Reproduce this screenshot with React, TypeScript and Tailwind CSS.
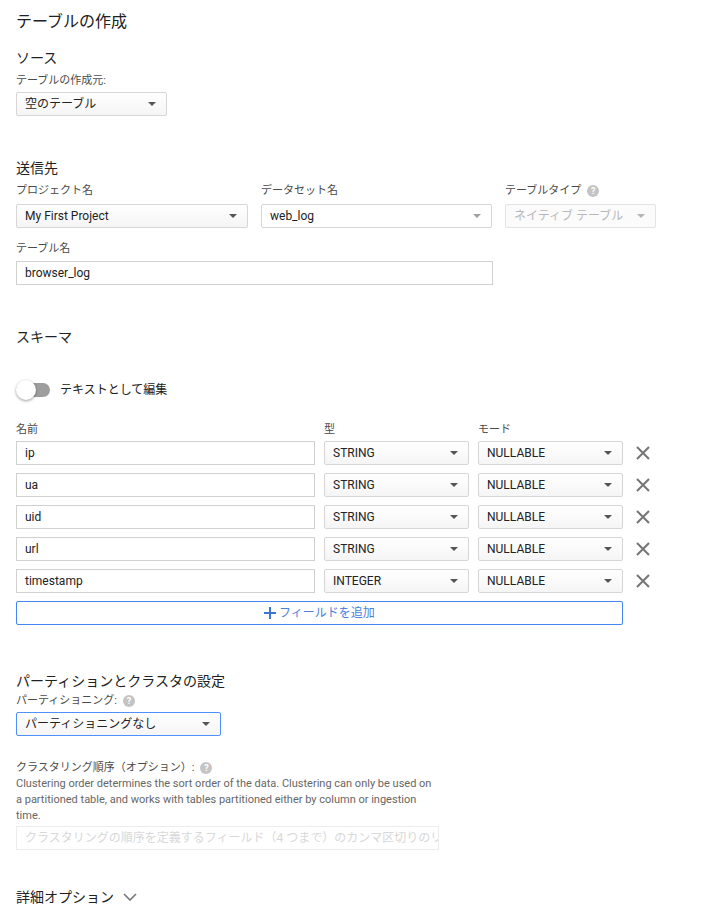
import React from "react";

const FONT = 'Roboto, "Noto Sans CJK JP", sans-serif';

function Arrow({ color }: { color: string }) {
  return (
    <svg width="8" height="4" viewBox="0 0 8 4" className="shrink-0">
      <path d="M0 0 L8 0 L4 4 Z" fill={color} />
    </svg>
  );
}

function Select({
  value,
  w,
  disabled,
  focused,
  light,
}: {
  value: string;
  w: string;
  disabled?: boolean;
  focused?: boolean;
  light?: boolean;
}) {
  const border = focused
    ? "border-[#4d90fe]"
    : disabled
    ? "border-[#e3e3e3]"
    : "border-[#d6d6d6]";
  const bg = disabled
    ? "bg-[#fbfbfb]"
    : light
    ? "bg-white"
    : "bg-gradient-to-b from-white to-[#f5f5f5]";
  const text = disabled ? "text-[#b8b8b8]" : "text-[#222]";
  const arrow = disabled ? "#b5b5b5" : light ? "#a0a0a0" : "#555";
  return (
    <div
      className={`${w} h-[24px] flex items-center justify-between pl-[8px] pr-[10px] border ${border} ${bg} ${text} rounded-[2px] text-[12px] shrink-0`}
    >
      <span className="whitespace-nowrap">{value}</span>
      <Arrow color={arrow} />
    </div>
  );
}

function Input({ value, w }: { value: string; w: string }) {
  return (
    <div
      className={`${w} h-[24px] flex items-center pl-[8px] border border-[#d0d0d0] bg-white text-[12px] text-[#222] shrink-0`}
    >
      {value}
    </div>
  );
}

function Help() {
  return (
    <span className="inline-flex items-center justify-center w-[12px] h-[12px] rounded-full bg-[#c4c4c4] text-white text-[9px] font-bold leading-none ml-[6px]">
      ?
    </span>
  );
}

function Label({ children }: { children: React.ReactNode }) {
  return (
    <div className="h-[16px] leading-[16px] text-[11px] text-[#4a4a4a] flex items-center whitespace-nowrap">
      {children}
    </div>
  );
}

function XIcon() {
  return (
    <svg width="14" height="14" viewBox="0 0 14 14">
      <path d="M1 1 L13 13 M13 1 L1 13" stroke="#757575" strokeWidth="2" />
    </svg>
  );
}

const rows = [
  { name: "ip", type: "STRING" },
  { name: "ua", type: "STRING" },
  { name: "uid", type: "STRING" },
  { name: "url", type: "STRING" },
  { name: "timestamp", type: "INTEGER" },
];

export default function App() {
  return (
    <div
      className="w-[703px] h-[912px] overflow-hidden bg-white pl-[16px] pt-[10px]"
      style={{ fontFamily: FONT }}
    >
      <div className="h-[24px] leading-[24px] text-[16px] text-[#212121]">テーブルの作成</div>

      <div className="mt-[14px] h-[20px] leading-[20px] text-[14px] text-[#212121]">ソース</div>
      <div className="mt-[5px]">
        <Label>テーブルの作成元:</Label>
      </div>
      <div className="mt-[3px]">
        <Select value="空のテーブル" w="w-[151px]" />
      </div>

      <div className="mt-[42px] h-[20px] leading-[20px] text-[14px] text-[#212121]">送信先</div>
      <div className="mt-[5px] flex gap-[13px]">
        <div className="w-[232px]">
          <Label>プロジェクト名</Label>
        </div>
        <div className="w-[231px]">
          <Label>データセット名</Label>
        </div>
        <div className="w-[151px]">
          <Label>
            テーブルタイプ
            <Help />
          </Label>
        </div>
      </div>
      <div className="mt-[5px] flex gap-[13px]">
        <Select value="My First Project" w="w-[232px]" />
        <Select value="web_log" w="w-[231px]" light />
        <Select value="ネイティブ テーブル" w="w-[151px]" disabled />
      </div>
      <div className="mt-[13px]">
        <Label>テーブル名</Label>
      </div>
      <div className="mt-[4px]">
        <Input value="browser_log" w="w-[477px]" />
      </div>

      <div className="mt-[42px] h-[20px] leading-[20px] text-[14px] text-[#212121]">スキーマ</div>

      <div className="mt-[33px] h-[20px] flex items-center">
        <div className="relative w-[35px] h-[20px]">
          <div className="absolute left-[10px] top-[3px] w-[24px] h-[14px] rounded-full bg-[#9e9e9e]" />
          <div className="absolute left-0 top-0 w-[20px] h-[20px] rounded-full bg-white shadow-[0_1px_3px_rgba(0,0,0,0.4)]" />
        </div>
        <span className="ml-[9px] text-[12px] text-[#212121]">テキストとして編集</span>
      </div>

      <div className="mt-[22px] flex gap-[9px]">
        <div className="w-[299px]">
          <Label>名前</Label>
        </div>
        <div className="w-[145px]">
          <Label>型</Label>
        </div>
        <div className="w-[145px]">
          <Label>モード</Label>
        </div>
      </div>
      <div className="mt-[3px] flex flex-col gap-[8px]">
        {rows.map((r) => (
          <div key={r.name} className="flex items-center gap-[9px]">
            <Input value={r.name} w="w-[299px]" />
            <Select value={r.type} w="w-[145px]" />
            <Select value="NULLABLE" w="w-[145px]" />
            <div className="ml-[4px] flex items-center">
              <XIcon />
            </div>
          </div>
        ))}
      </div>
      <div className="mt-[8px] w-[607px] h-[24px] border border-[#4285f4] rounded-[2px] flex items-center justify-center">
        <svg width="12" height="12" viewBox="0 0 12 12" className="mr-[3px]">
          <path d="M6 0 V12 M0 6 H12" stroke="#3b74d6" strokeWidth="2" />
        </svg>
        <span className="text-[12px] text-[#4a80dc]">フィールドを追加</span>
      </div>

      <div className="mt-[46px] h-[20px] leading-[20px] text-[14px] text-[#212121]">
        パーティションとクラスタの設定
      </div>
      <div className="mt-[2px]">
        <Label>
          パーティショニング:
          <Help />
        </Label>
      </div>
      <div className="mt-[3px]">
        <Select value="パーティショニングなし" w="w-[205px]" focused />
      </div>

      <div className="mt-[24px]">
        <Label>
          クラスタリング順序（オプション）:
          <Help />
        </Label>
      </div>
      <div className="w-[420px] text-[11px] leading-[16px] text-[#666]">
        Clustering order determines the sort order of the data. Clustering can only be used on a
        partitioned table, and works with tables partitioned either by column or ingestion time.
      </div>
      <div className="mt-[2px] w-[423px] h-[24px] border border-[#ececec] flex items-center pl-[8px] overflow-hidden">
        <span className="whitespace-nowrap text-[12px] text-[#d8d8d8]">
          クラスタリングの順序を定義するフィールド（4 つまで）のカンマ区切りのリスト
        </span>
      </div>

      <div className="mt-[37px] h-[20px] flex items-center text-[14px] text-[#212121]">
        詳細オプション
        <svg width="14" height="8" viewBox="0 0 14 8" className="ml-[9px]">
          <path d="M1 1 L7 7 L13 1" stroke="#757575" strokeWidth="1.6" fill="none" />
        </svg>
      </div>
    </div>
  );
}
